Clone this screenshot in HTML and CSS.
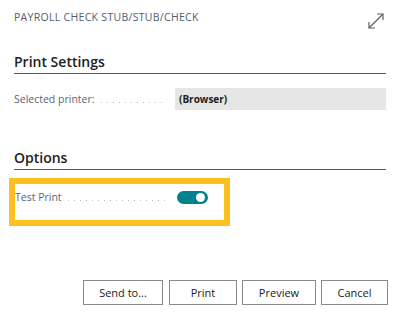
FILE: index.html
```html
<!doctype html>
<html>

<head>
    <meta charset="UTF-8">
    <title>Payroll Check Stub/Stub/Check</title>
    <link rel="stylesheet" href="styles.css">
</head>

<body>
    <div class="dialog">
        <!-- title bar -->
        <div class="dialog-header">
            <div class="dialog-title">PAYROLL CHECK STUB/STUB/CHECK</div>
            <svg class="expand" width="18" height="18" viewBox="0 0 18 18" fill="none" stroke="#616161" stroke-width="1.2">
                <path d="M2 16 L16 2" />
                <path d="M10 2 H16 V8" />
                <path d="M2 10 V16 H8" />
            </svg>
        </div>

        <!-- print settings -->
        <div class="group">
            <div class="group-title">Print Settings</div>
            <div class="field">
                <div class="field-label"><span>Selected printer:</span></div>
                <div class="field-value">(Browser)</div>
            </div>
        </div>

        <!-- options -->
        <div class="group group-options">
            <div class="group-title">Options</div>
            <div class="highlight">
                <div class="field field-toggle">
                    <div class="field-label"><span>Test Print</span></div>
                    <div class="toggle"><span class="knob"></span></div>
                </div>
            </div>
        </div>

        <!-- actions -->
        <div class="actions">
            <button class="btn btn-send">Send to...</button>
            <button class="btn btn-print">Print</button>
            <button class="btn btn-preview">Preview</button>
            <button class="btn btn-cancel">Cancel</button>
        </div>
    </div>
</body>

</html>
```

FILE: styles.css
```css
/* Layout */

body {
    margin: 0;
    background: #ffffff;
    font-family: "Open Sans", "Noto Sans", sans-serif;
    color: #212121;
}

.dialog {
    width: 397px;
    height: 319px;
    box-sizing: border-box;
    padding: 0 11px 0 14px;
}

.dialog-header {
    display: flex;
    justify-content: space-between;
    align-items: flex-start;
    padding-top: 10px;
}

.dialog-title {
    font-size: 10.5px;
    line-height: 14px;
    color: #505c6d;
    letter-spacing: 0.3px;
}

.expand {
    margin-top: 2px;
    margin-right: 1px;
}

.group {
    margin-top: 22px;
}

.group-options {
    margin-top: 38px;
}

.group-title {
    font-size: 14px;
    font-weight: 600;
    line-height: 20px;
    padding-bottom: 1px;
    border-bottom: 1px solid #505c6d;
    color: #212121;
}

/* Fields */

.field {
    display: flex;
    align-items: center;
    margin-top: 14px;
    height: 22px;
}

.field-label {
    width: 161px;
    flex: none;
    display: flex;
    align-items: baseline;
    font-size: 10.5px;
    color: #5a6576;
}

.field-label::after {
    content: "";
    flex: 1;
    height: 1px;
    margin: 0 8px 0 6px;
    background-image: linear-gradient(to right, #bdbdbd 1px, transparent 1px);
    background-size: 6px 1px;
    background-repeat: repeat-x;
}

.field-value {
    flex: 1;
    height: 22px;
    line-height: 22px;
    background: #e6e6e6;
    padding-left: 4px;
    font-size: 10px;
    font-weight: 700;
    color: #212121;
}

.highlight {
    margin: 8px 0 0 -5px;
    width: 209px;
    height: 36px;
    border: 6px solid #ffc01f;
}

.field-toggle {
    margin-top: 0;
    height: 26px;
}

.field-toggle .field-label {
    width: 162px;
}

.toggle {
    width: 31px;
    height: 13px;
    border-radius: 7px;
    background: #00838a;
    position: relative;
}

.knob {
    position: absolute;
    top: 2px;
    right: 3px;
    width: 9px;
    height: 9px;
    border-radius: 50%;
    background: #ffffff;
}

/* Buttons */

.actions {
    display: flex;
    justify-content: flex-end;
    gap: 5px;
    margin-top: 54px;
    margin-right: -2px;
}

.btn {
    height: 25px;
    box-sizing: border-box;
    border: 1px solid #8a8a8a;
    background: #ffffff;
    font-family: "Open Sans", "Noto Sans", sans-serif;
    font-size: 11px;
    color: #212121;
    padding: 0;
}

.btn-send { width: 80px; margin-right: 1px; }
.btn-print { width: 68px; }
.btn-preview { width: 74px; }
.btn-cancel { width: 67px; }
```
